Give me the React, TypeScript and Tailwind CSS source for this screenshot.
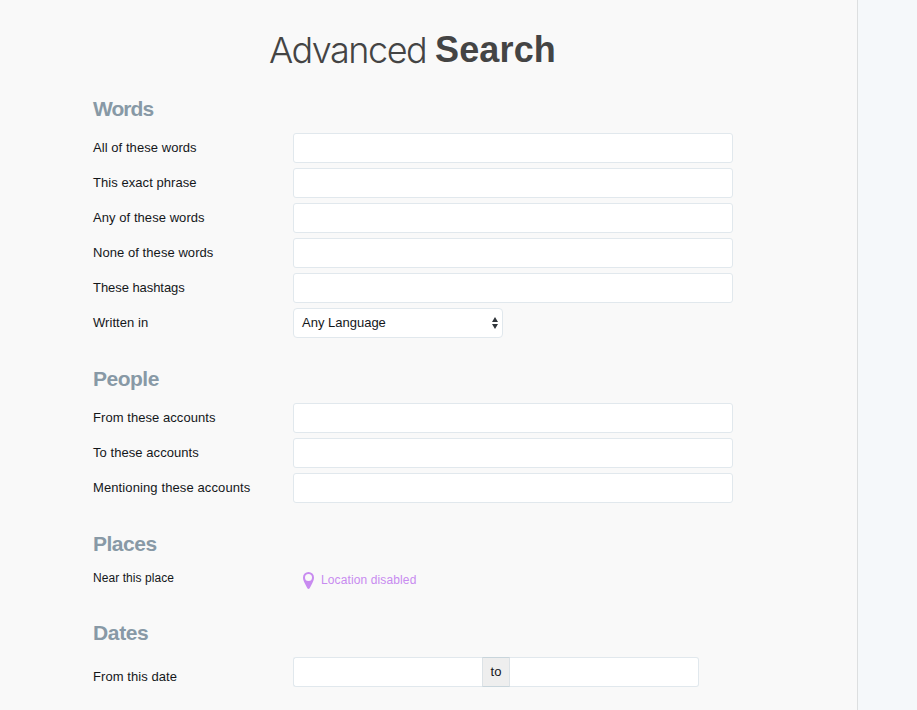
import React from 'react';

function Section({ title, className, tracking = 'tracking-[-0.5px]', children }: { title: string; className: string; tracking?: string; children: React.ReactNode }) {
  return (
    <section className={className}>
      <h2 className={`h-[24px] text-[21px] leading-[24px] font-bold text-[#8899a6] ${tracking}`}>{title}</h2>
      {children}
    </section>
  );
}

function Row({ label, tracking = 'tracking-[0.06px]', children }: { label: string; tracking?: string; children?: React.ReactNode }) {
  return (
    <div className="flex h-[30px]">
      <label className={`w-[200px] shrink-0 pt-[5px] leading-[20px] ${tracking}`}>{label}</label>
      {children ?? (
        <input aria-label={label} className="h-[30px] w-[440px] rounded-[3px] border border-[#e1e8ed] bg-white px-2 outline-none" />
      )}
    </div>
  );
}

export default function App() {
  return (
    <div className="flex h-[710px] w-[917px] overflow-hidden bg-[#f5f8fa] font-['Liberation_Sans',Arial,sans-serif] text-[13px] text-[#14171a]">
      <main className="w-[858px] shrink-0 border-r border-[#dddfe0] bg-[#f9f9f9] pl-[93px]">
        <h1 className="flex h-[97px] pt-[29px] pl-[176px] text-[36px] leading-[42px] whitespace-pre text-[#444]">
          <span className="w-[166px] font-['Inter',sans-serif] font-light tracking-[-1.5px]">Advanced</span>
          <b className="font-bold tracking-[0.15px]">Search</b>
        </h1>

        <Section title="Words" className="h-[270px]" tracking="tracking-[-0.95px]">
          <div className="flex flex-col gap-[5px] pt-3">
            <Row label="All of these words" />
            <Row label="This exact phrase" />
            <Row label="Any of these words" />
            <Row label="None of these words" />
            <Row label="These hashtags" tracking="tracking-[-0.06px]" />
            <Row label="Written in">
              <button className="flex h-[30px] w-[210px] items-center justify-between rounded-[4px] border border-[#e1e8ed] bg-white pr-[4px] pl-2">
                <span>Any Language</span>
                <svg width="6" height="12" viewBox="0 0 6 12" fill="#30353a">
                  <path d="M0 5 3 0l3 5zM0 7h6l-3 5z" />
                </svg>
              </button>
            </Row>
          </div>
        </Section>

        <Section title="People" className="h-[165px]">
          <div className="flex flex-col gap-[5px] pt-3">
            <Row label="From these accounts" />
            <Row label="To these accounts" />
            <Row label="Mentioning these accounts" tracking="tracking-[0.11px]" />
          </div>
        </Section>

        <Section title="Places" className="h-[89px]">
          <div className="flex pt-3">
            <span className="w-[210px] text-[12px] leading-[20px] tracking-[0.06px]">Near this place</span>
            <span className="flex pt-[2px] text-[12px] leading-[20px] tracking-[0.12px] text-[#c88bf0]">
              <svg width="11" height="17" viewBox="0 0 11 17" className="mt-[2px] mr-[7px]" fill="currentColor">
                <path fillRule="evenodd" d="M5.5 0A5.5 5.5 0 0 0 0 5.5C0 7.5.7 9 1.6 11L4.2 16Q5.5 17.8 6.8 16L9.4 11C10.3 9 11 7.5 11 5.5A5.5 5.5 0 0 0 5.5 0Zm0 2a3.5 3.5 0 1 1 0 7 3.5 3.5 0 0 1 0-7Z" />
              </svg>
              Location disabled
            </span>
          </div>
        </Section>

        <Section title="Dates" className="" tracking="tracking-[-0.35px]">
          <div className="flex pt-3">
            <label className="w-[200px] pt-[10px] leading-[20px] tracking-[0.06px]">From this date</label>
            <div className="flex h-[30px] w-[406px]">
              <input aria-label="From" className="w-[189px] rounded-l-[3px] border border-r-0 border-[#e1e8ed] bg-white outline-none" />
              <span className="w-[28px] border border-x-[#dce2e6] border-y-[#c8d5dc] bg-[#eee] text-center leading-[28px]">to</span>
              <input aria-label="To" className="w-[189px] rounded-r-[3px] border border-l-0 border-[#e1e8ed] bg-white outline-none" />
            </div>
          </div>
        </Section>
      </main>
    </div>
  );
}
